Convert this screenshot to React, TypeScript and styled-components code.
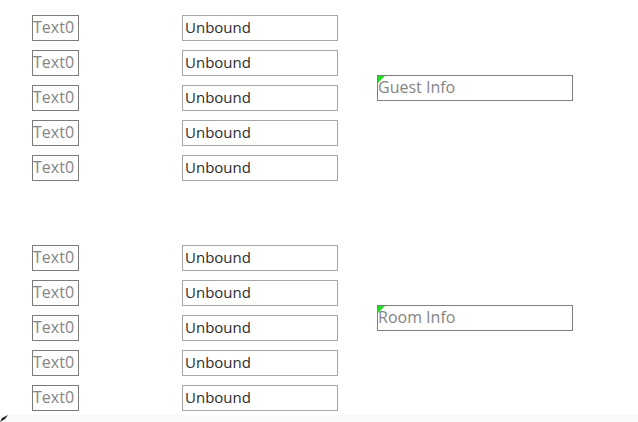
import styled, { createGlobalStyle } from "styled-components"

const GlobalStyle = createGlobalStyle`
    body {
        margin: 0;
        background: #ffffff;
        font-family: "Open Sans", "Noto Sans", sans-serif;
    }
`

type SectionType = {
    title: string
    rows: number
}

const sections: SectionType[] = [
    { title: "Guest Info", rows: 5 },
    { title: "Room Info", rows: 5 }
]

const Section = ({ title, rows }: SectionType) => {
    const list = Array.from({ length: rows }, (_, i) => i)
    return (
        <StyledSection>
            <Column>
                {list.map((i) => (
                    <Label key={`label-${i}`}>Text0</Label>
                ))}
            </Column>
            <FieldColumn>
                {list.map((i) => (
                    <Field key={`field-${i}`}>Unbound</Field>
                ))}
            </FieldColumn>
            <InfoBox>{title}</InfoBox>
        </StyledSection>
    )
}

export default function App() {
    return (
        <Page>
            <GlobalStyle />
            <Canvas>
                {sections.map((s) => (
                    <Section key={s.title} {...s} />
                ))}
            </Canvas>
            <BottomBar>
                <svg width="9" height="7" viewBox="0 0 9 7">
                    <path d="M0 7 L2 3 L8 0 L5 4 Z" fill="#222" />
                </svg>
            </BottomBar>
        </Page>
    )
}

const Page = styled.div`
    width: 638px;
    height: 422px;
    display: flex;
    flex-flow: column;
    overflow: hidden;
`

const Canvas = styled.div`
    flex: 1;
    display: flex;
    flex-flow: column;
    gap: 64px;
    padding: 15px 0 0 32px;
`

const StyledSection = styled.div`
    display: flex;
    flex-flow: row nowrap;
    align-items: flex-start;
`

const Column = styled.div`
    display: flex;
    flex-flow: column;
    gap: 9px;
`

const FieldColumn = styled(Column)`
    margin-left: 103px;
`

const Box = styled.div`
    box-sizing: border-box;
    height: 26px;
    line-height: 22px;
    font-size: 16px;
    white-space: nowrap;
    overflow: hidden;
`

const Label = styled(Box)`
    width: 47px;
    border: 1px solid #7a7a7a;
    color: #858585;
    padding-left: 0;
`

const Field = styled(Box)`
    width: 156px;
    border: 1px solid #a5a5a5;
    color: #2d2d2d;
    font-size: 15px;
    padding-left: 2px;
`

const InfoBox = styled(Box)`
    position: relative;
    width: 196px;
    margin: 60px 0 0 39px;
    border: 1px solid #7f7f7f;
    color: #858585;
    padding-left: 0;

    &::before {
        content: "";
        position: absolute;
        top: 0;
        left: 0;
        border-top: 7px solid #22dd22;
        border-right: 7px solid transparent;
    }
`

const BottomBar = styled.div`
    height: 7px;
    background: #f9f9f9;
    display: flex;
    align-items: flex-end;

    svg {
        display: block;
    }
`
